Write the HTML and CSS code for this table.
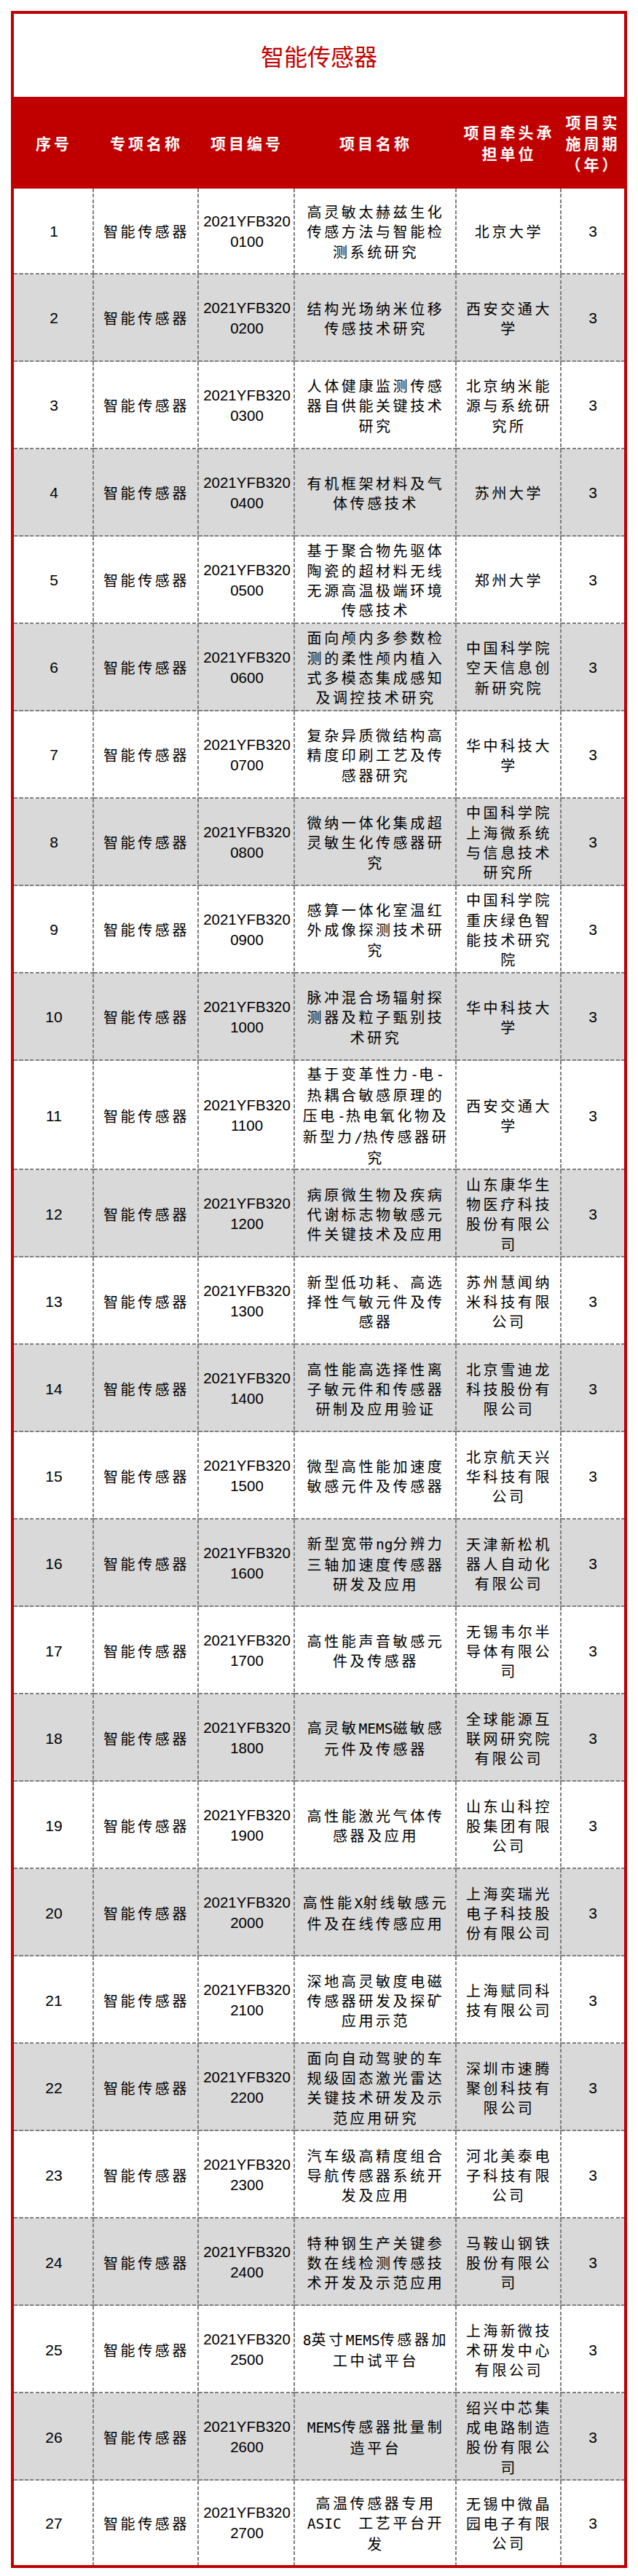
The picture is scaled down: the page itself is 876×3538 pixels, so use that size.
FILE: index.html
```html
<!DOCTYPE html>
<html lang="zh-CN">
<head>
<meta charset="utf-8">
<title>智能传感器</title>
<link rel="stylesheet" href="styles.css">
</head>
<body>
<div class="sheet">
  <h1 class="title">智能传感器</h1>
  <table class="grid">
    <colgroup>
      <col class="w1"><col class="w2"><col class="w3"><col class="w4"><col class="w5"><col class="w6">
    </colgroup>
    <thead>
      <tr>
        <th>序号</th>
        <th>专项名称</th>
        <th>项目编号</th>
        <th>项目名称</th>
        <th>项目牵头承担单位</th>
        <th>项目实施周期（年）</th>
      </tr>
    </thead>
    <tbody>
      <tr><td class="num">1</td><td>智能传感器</td><td class="code">2021YFB320<wbr>0100</td><td>高灵敏太赫兹生化传感方法与智能检测系统研究</td><td>北京大学</td><td class="num">3</td></tr>
      <tr><td class="num">2</td><td>智能传感器</td><td class="code">2021YFB320<wbr>0200</td><td>结构光场纳米位移传感技术研究</td><td>西安交通大学</td><td class="num">3</td></tr>
      <tr><td class="num">3</td><td>智能传感器</td><td class="code">2021YFB320<wbr>0300</td><td>人体健康监测传感器自供能关键技术研究</td><td>北京纳米能源与系统研究所</td><td class="num">3</td></tr>
      <tr><td class="num">4</td><td>智能传感器</td><td class="code">2021YFB320<wbr>0400</td><td>有机框架材料及气体传感技术</td><td>苏州大学</td><td class="num">3</td></tr>
      <tr><td class="num">5</td><td>智能传感器</td><td class="code">2021YFB320<wbr>0500</td><td>基于聚合物先驱体陶瓷的超材料无线无源高温极端环境传感技术</td><td>郑州大学</td><td class="num">3</td></tr>
      <tr><td class="num">6</td><td>智能传感器</td><td class="code">2021YFB320<wbr>0600</td><td>面向颅内多参数检测的柔性颅内植入式多模态集成感知及调控技术研究</td><td>中国科学院空天信息创新研究院</td><td class="num">3</td></tr>
      <tr><td class="num">7</td><td>智能传感器</td><td class="code">2021YFB320<wbr>0700</td><td>复杂异质微结构高精度印刷工艺及传感器研究</td><td>华中科技大学</td><td class="num">3</td></tr>
      <tr><td class="num">8</td><td>智能传感器</td><td class="code">2021YFB320<wbr>0800</td><td>微纳一体化集成超灵敏生化传感器研究</td><td>中国科学院上海微系统与信息技术研究所</td><td class="num">3</td></tr>
      <tr><td class="num">9</td><td>智能传感器</td><td class="code">2021YFB320<wbr>0900</td><td>感算一体化室温红外成像探测技术研究</td><td>中国科学院重庆绿色智能技术研究院</td><td class="num">3</td></tr>
      <tr><td class="num">10</td><td>智能传感器</td><td class="code">2021YFB320<wbr>1000</td><td>脉冲混合场辐射探测器及粒子甄别技术研究</td><td>华中科技大学</td><td class="num">3</td></tr>
      <tr><td class="num">11</td><td>智能传感器</td><td class="code">2021YFB320<wbr>1100</td><td>基于变革性力<span class="lat">-</span>电<span class="lat">-</span>热耦合敏感原理的压电<span class="lat">-</span>热电氧化物及新型力<span class="lat">/</span>热传感器研究</td><td>西安交通大学</td><td class="num">3</td></tr>
      <tr><td class="num">12</td><td>智能传感器</td><td class="code">2021YFB320<wbr>1200</td><td>病原微生物及疾病代谢标志物敏感元件关键技术及应用</td><td>山东康华生物医疗科技股份有限公司</td><td class="num">3</td></tr>
      <tr><td class="num">13</td><td>智能传感器</td><td class="code">2021YFB320<wbr>1300</td><td>新型低功耗、高选择性气敏元件及传感器</td><td>苏州慧闻纳米科技有限公司</td><td class="num">3</td></tr>
      <tr><td class="num">14</td><td>智能传感器</td><td class="code">2021YFB320<wbr>1400</td><td>高性能高选择性离子敏元件和传感器研制及应用验证</td><td>北京雪迪龙科技股份有限公司</td><td class="num">3</td></tr>
      <tr><td class="num">15</td><td>智能传感器</td><td class="code">2021YFB320<wbr>1500</td><td>微型高性能加速度敏感元件及传感器</td><td>北京航天兴华科技有限公司</td><td class="num">3</td></tr>
      <tr><td class="num">16</td><td>智能传感器</td><td class="code">2021YFB320<wbr>1600</td><td>新型宽带<span class="lat">ng</span>分辨力三轴加速度传感器研发及应用</td><td>天津新松机器人自动化有限公司</td><td class="num">3</td></tr>
      <tr><td class="num">17</td><td>智能传感器</td><td class="code">2021YFB320<wbr>1700</td><td>高性能声音敏感元件及传感器</td><td>无锡韦尔半导体有限公司</td><td class="num">3</td></tr>
      <tr><td class="num">18</td><td>智能传感器</td><td class="code">2021YFB320<wbr>1800</td><td>高灵敏<span class="lat">MEMS</span>磁敏感元件及传感器</td><td>全球能源互联网研究院有限公司</td><td class="num">3</td></tr>
      <tr><td class="num">19</td><td>智能传感器</td><td class="code">2021YFB320<wbr>1900</td><td>高性能激光气体传感器及应用</td><td>山东山科控股集团有限公司</td><td class="num">3</td></tr>
      <tr><td class="num">20</td><td>智能传感器</td><td class="code">2021YFB320<wbr>2000</td><td>高性能<span class="lat">X</span>射线敏感元件及在线传感应用</td><td>上海奕瑞光电子科技股份有限公司</td><td class="num">3</td></tr>
      <tr><td class="num">21</td><td>智能传感器</td><td class="code">2021YFB320<wbr>2100</td><td>深地高灵敏度电磁传感器研发及探矿应用示范</td><td>上海赋同科技有限公司</td><td class="num">3</td></tr>
      <tr><td class="num">22</td><td>智能传感器</td><td class="code">2021YFB320<wbr>2200</td><td>面向自动驾驶的车规级固态激光雷达关键技术研发及示范应用研究</td><td>深圳市速腾聚创科技有限公司</td><td class="num">3</td></tr>
      <tr><td class="num">23</td><td>智能传感器</td><td class="code">2021YFB320<wbr>2300</td><td>汽车级高精度组合导航传感器系统开发及应用</td><td>河北美泰电子科技有限公司</td><td class="num">3</td></tr>
      <tr><td class="num">24</td><td>智能传感器</td><td class="code">2021YFB320<wbr>2400</td><td>特种钢生产关键参数在线检测传感技术开发及示范应用</td><td>马鞍山钢铁股份有限公司</td><td class="num">3</td></tr>
      <tr><td class="num">25</td><td>智能传感器</td><td class="code">2021YFB320<wbr>2500</td><td><span class="lat">8</span>英寸<span class="lat">MEMS</span>传感器加工中试平台</td><td>上海新微技术研发中心有限公司</td><td class="num">3</td></tr>
      <tr><td class="num">26</td><td>智能传感器</td><td class="code">2021YFB320<wbr>2600</td><td><span class="lat">MEMS</span>传感器批量制造平台</td><td>绍兴中芯集成电路制造股份有限公司</td><td class="num">3</td></tr>
      <tr><td class="num">27</td><td>智能传感器</td><td class="code">2021YFB320<wbr>2700</td><td>高温传感器专用<span class="lat">ASIC&nbsp;&nbsp;</span>工艺平台开发</td><td>无锡中微晶园电子有限公司</td><td class="num">3</td></tr>
    </tbody>
  </table>
</div>
</body>
</html>
```

FILE: styles.css
```css
html, body {
  margin: 0;
  background: #ffffff;
}

body {
  padding: 15px 15px 16px;
  font-family: "Noto Sans CJK SC", "Liberation Sans", sans-serif;
  color: #000000;
}

.sheet {
  width: 838px;
  border: 4px solid #c00000;
}

.title {
  height: 114px;
  margin: 0;
  display: flex;
  align-items: center;
  justify-content: center;
  color: #c00000;
  font-size: 32px;
  font-weight: normal;
  line-height: 1;
}

.grid {
  width: 838px;
  table-layout: fixed;
  border-collapse: collapse;
  border-spacing: 0;
}

.w1 { width: 110px; }
.w2 { width: 144px; }
.w3 { width: 132px; }
.w4 { width: 222px; }
.w5 { width: 144px; }
.w6 { width: 86px; }

.grid th {
  height: 126px;
  padding: 0 4px;
  background: #c00000;
  color: #ffffff;
  font-size: 21px;
  font-weight: bold;
  letter-spacing: 4px;
  line-height: 29px;
  text-align: center;
  vertical-align: middle;
}

.grid td {
  padding: 4px 6px;
  font-size: 20px;
  letter-spacing: 3.6px;
  line-height: 27.3px;
  text-align: center;
  vertical-align: middle;
  background-color: #ffffff;
  background-image:
    repeating-linear-gradient(to bottom, #7f7f7f 0 5px, transparent 5px 7.5px),
    repeating-linear-gradient(to right, #7f7f7f 0 5px, transparent 5px 7.5px);
  background-size: 2px 100%, 100% 2px;
  background-position: right top, left bottom;
  background-repeat: no-repeat;
}

.grid tbody tr { height: 120px; }
.grid tbody tr:first-child { height: 118px; }
.grid tbody tr:last-child { height: 116px; }

.grid tbody tr:nth-child(even) td { background-color: #d9d9d9; }

.grid td:last-child { background-size: 0 0, 100% 2px; }
.grid tbody tr:last-child td { background-size: 2px 100%, 0 0; }
.grid tbody tr:last-child td:last-child { background-size: 0 0, 0 0; }

.grid td.num {
  font-family: "Liberation Sans", sans-serif;
  font-size: 21px;
  letter-spacing: 0;
}

.grid td.code {
  padding: 4px;
  font-family: "Liberation Sans", sans-serif;
  font-size: 20.5px;
  letter-spacing: 0;
  line-height: 28px;
}

.lat {
  font-family: "DejaVu Sans Mono", monospace;
  font-size: 19.5px;
  letter-spacing: 0;
}
```
